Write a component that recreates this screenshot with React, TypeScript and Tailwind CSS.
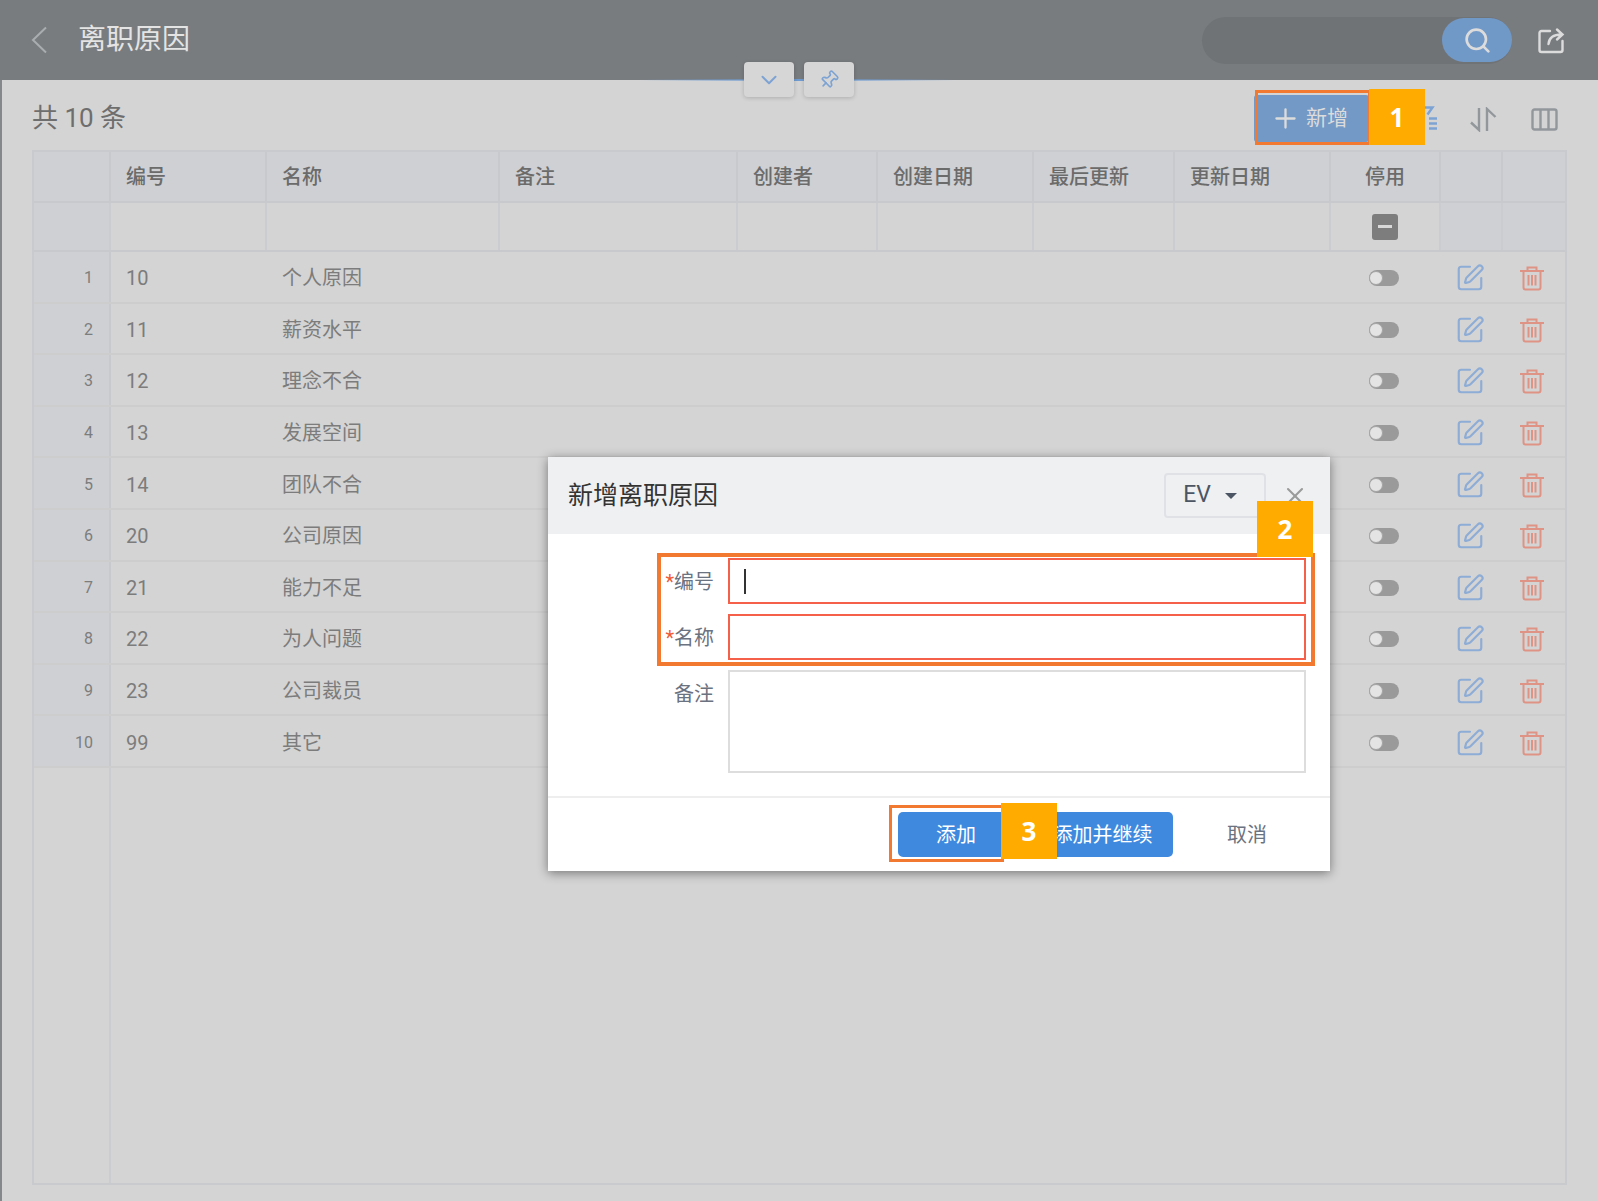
import { ChevronDown, Pin, Plus, Search, SquarePen, X } from "lucide-react";

const font = { fontFamily: 'Roboto, "Noto Sans CJK SC", sans-serif' };

const columns = [
  { title: "", width: "w-[77px]" },
  { title: "编号", width: "w-[156px]" },
  { title: "名称", width: "w-[233px]" },
  { title: "备注", width: "w-[238px]" },
  { title: "创建者", width: "w-[140px]" },
  { title: "创建日期", width: "w-[156px]" },
  { title: "最后更新", width: "w-[141px]" },
  { title: "更新日期", width: "w-[156px]" },
  { title: "停用", width: "w-[110px]" },
  { title: "", width: "w-[62px]" },
  { title: "", width: "w-[62px]" },
];

const rows = [
  { id: 10, name: "个人原因" },
  { id: 11, name: "薪资水平" },
  { id: 12, name: "理念不合" },
  { id: 13, name: "发展空间" },
  { id: 14, name: "团队不合" },
  { id: 20, name: "公司原因" },
  { id: 21, name: "能力不足" },
  { id: 22, name: "为人问题" },
  { id: 23, name: "公司裁员" },
  { id: 99, name: "其它" },
];

function BackIcon() {
  return (
    <svg width="18" height="28" viewBox="0 0 18 28" fill="none" stroke="#aaadaf" strokeWidth="2">
      <path d="M16 1.500 3 14l13 12.500" />
    </svg>
  );
}

function TrashIcon() {
  return (
    <svg width="26" height="26" viewBox="0 0 26 26" fill="none" stroke="#de9385" strokeWidth="2">
      <path d="M1 6h24M8.500 6V2.500h9V6M4.500 6v16.500a2 2 0 0 0 2 2h13a2 2 0 0 0 2-2V6M9.500 10v10.500M13 10v10.500M16.500 10v10.500" />
    </svg>
  );
}

function ExportIcon() {
  return (
    <svg width="28" height="28" viewBox="0 0 28 28" fill="none" stroke="#dcdcdc" strokeWidth="2.400" strokeLinecap="round">
      <path d="M13 5H4.500a2 2 0 0 0-2 2v17a2 2 0 0 0 2 2h19a2 2 0 0 0 2-2v-9" />
      <path d="M11.500 18c.5-6 5-9.500 13-9.500M20 3.500l5.500 5-5.500 5" />
    </svg>
  );
}

function FilterIcon() {
  return (
    <svg width="16" height="26" viewBox="0 0 16 26" fill="none" stroke="#7da3d3" strokeWidth="2.400">
      <path d="M2 2.500h9.500l-5 7" />
      <path d="M8 13.500h8M8 18.500h8M8 23.500h8" />
    </svg>
  );
}

function SortIcon() {
  return (
    <svg width="28" height="25" viewBox="0 0 28 25" fill="none" stroke="#92979c" strokeWidth="2.400">
      <path d="M10 1v22L2 15.500M18 24V2l8.500 8" />
    </svg>
  );
}

function ColumnsIcon() {
  return (
    <svg width="27" height="23" viewBox="0 0 27 23" fill="none" stroke="#92979c" strokeWidth="2.400">
      <rect x="1.500" y="1.500" width="24" height="20" rx="2" />
      <path d="M9.500 1.500v20M17.500 1.500v20" />
    </svg>
  );
}

function Marker({ n, className }: { n: number; className: string }) {
  return (
    <div className={`absolute z-30 flex h-[56px] w-[56px] items-center justify-center bg-[#ffab00] text-[26px] font-bold text-white ${className}`}
      style={{ fontFamily: '"Open Sans", sans-serif' }}>
      {n}
    </div>
  );
}

function Dialog() {
  return (
    <div className="absolute left-[548px] top-[457px] z-20 flex h-[414px] w-[782px] flex-col bg-white shadow-[0_2px_10px_rgba(0,0,0,0.45)]">
      <div className="flex h-[77px] items-center justify-between bg-[#eff0f2] pl-[20px] pr-[21px]">
        <span className="text-[25px] text-[#333]">新增离职原因</span>
        <div className="flex items-center gap-[15px]">
          <div className="flex h-[45px] w-[102px] items-center justify-center gap-[14px] rounded-[4px] border-2 border-[#dfe1e6] pr-[10px] text-[23px] text-[#4b5563]">
            EV
            <span className="h-0 w-0 border-x-[6px] border-t-[6px] border-x-transparent border-t-[#4b5563]" />
          </div>
          <X size={28} strokeWidth={1.800} color="#9a9a9a" />
        </div>
      </div>
      <div className="flex flex-1 flex-col gap-[10px] pl-[180px] pr-[24px] pt-[24px]">
        <div className="flex h-[46px] gap-[14px]">
          <label className="-ml-[80px] w-[66px] pt-[10px] text-right text-[20px] leading-[28px] text-[#6b7280]"><span className="text-[#ef5a36]">*</span>编号</label>
          <div className="flex flex-1 items-center border-2 border-[#f4604a] pl-[14px]">
            <span className="h-[25px] w-[2px] bg-[#333]" />
          </div>
        </div>
        <div className="flex h-[46px] gap-[14px]">
          <label className="-ml-[80px] w-[66px] pt-[10px] text-right text-[20px] leading-[28px] text-[#6b7280]"><span className="text-[#ef5a36]">*</span>名称</label>
          <div className="flex-1 border-2 border-[#f4604a]" />
        </div>
        <div className="flex h-[103px] gap-[14px]">
          <label className="-ml-[80px] w-[66px] pt-[10px] text-right text-[20px] leading-[28px] text-[#6b7280]">备注</label>
          <div className="flex-1 border-2 border-[#dddddd]" />
        </div>
      </div>
      <div className="flex h-[75px] items-start border-t-2 border-[#eeeeee] pl-[350px] pt-[14px]">
        <button className="h-[45px] w-[122px] rounded-[5px] bg-[#3f8ade] pr-[6px] text-[20px] text-white">添加</button>
        <button className="h-[45px] w-[153px] rounded-[5px] bg-[#3f8ade] pl-[12px] text-[20px] text-white">添加并继续</button>
        <button className="ml-[54px] h-[45px] text-[20px] text-[#6b7280]">取消</button>
      </div>
    </div>
  );
}

export default function App() {
  return (
    <div className="relative flex h-[1201px] w-[1598px] flex-col overflow-hidden bg-[#d4d4d4]" style={font}>
      <header className="flex h-[80px] shrink-0 items-center bg-[#797c7f] pl-[30px] pr-[33px]">
        <BackIcon />
        <h1 className="ml-[30px] text-[28px] text-[#e4e4e4]">离职原因</h1>
        <div className="ml-auto flex items-center gap-[25px]">
          <div className="flex h-[47px] w-[310px] items-center justify-end rounded-full bg-[#707376]">
            <div className="flex h-[44px] w-[70px] items-center justify-center rounded-full bg-[#7199c8]">
              <Search size={29} strokeWidth={2.200} color="#dcdcdc" />
            </div>
          </div>
          <ExportIcon />
        </div>
      </header>

      {/* 顶部折叠/固定按钮 */}
      <div className="absolute left-[640px] top-[79px] h-[2px] w-[315px] bg-gradient-to-r from-transparent via-[#6f9bd1] to-transparent" />
      <div className="absolute left-[744px] top-[62px] z-10 flex gap-[10px]">
        <div className="flex h-[35px] w-[50px] items-center justify-center rounded-[4px] bg-[#d6d6d6] shadow-[0_1px_4px_rgba(0,0,0,0.18)]">
          <ChevronDown size={26} strokeWidth={1.800} color="#7da3d3" />
        </div>
        <div className="flex h-[35px] w-[50px] items-center justify-center rounded-[4px] bg-[#d6d6d6] shadow-[0_1px_4px_rgba(0,0,0,0.18)]">
          <Pin size={20} strokeWidth={2} color="#7da3d3" className="rotate-45" />
        </div>
      </div>

      <div className="flex flex-1 flex-col border-l-2 border-[#85888b]">
        <div className="flex h-[70px] shrink-0 items-center pl-[30px] pr-[40px]">
          <span className="mt-[6px] text-[26px] text-[#6e6e6e]">共 10 条</span>
          <button className="ml-auto mt-[7px] flex h-[47px] w-[115px] items-center justify-center gap-[5px] rounded-[3px] bg-[#7399c6] pr-[5px] text-[21px] text-[#dcdcdc]">
            <Plus size={31} strokeWidth={1.800} />新增
          </button>
          <div className="ml-[52px] mt-[6px] w-[16px]">
            <FilterIcon />
          </div>
          <div className="ml-[32px] mt-[8px] flex items-center gap-[34px]">
            <SortIcon />
            <ColumnsIcon />
          </div>
        </div>

        <div className="ml-[30px] flex h-[1035px] w-[1535px] shrink-0 flex-col border-2 border-[#c9cacd] text-[#7c7c7c]">
          <div className="flex h-[51px] shrink-0 border-b-2 border-[#c8c9cc] bg-[#cfd0d3]">
            {columns.map((col, i) => (
              <div key={i} className={`${col.width} flex shrink-0 items-center border-r-2 border-[#c8c9cc] text-[20px] font-medium text-[#6b6b6b] last:border-r-0 ${col.title === "停用" ? "justify-center" : "pl-[15px]"}`}>
                {col.title}
              </div>
            ))}
          </div>
          <div className="flex h-[49px] shrink-0 border-b-2 border-[#c8c9cc]">
            {columns.map((col, i) => (
              <div key={i} className={`${col.width} flex shrink-0 items-center justify-center border-r-2 border-[#cbcccf] last:border-r-0 ${i === 0 || i > 8 ? "bg-[#cfd0d3]" : ""}`}>
                {col.title === "停用" && (
                  <span className="flex h-[26px] w-[26px] items-center justify-center rounded-[3px] bg-[#7d7d7d]">
                    <span className="h-[3px] w-[14px] bg-[#d8d8d8]" />
                  </span>
                )}
              </div>
            ))}
          </div>
          {rows.map((row, i) => (
            <div key={row.id} className="flex h-[51.600px] shrink-0 items-center border-b-2 border-[#cdcdcd]">
              <div className="flex h-full w-[77px] shrink-0 items-center justify-end border-r-2 border-[#c8c9cc] bg-[#cfd0d3] pr-[16px] pt-[3px] text-[16px] text-[#7d7d7d]">{i + 1}</div>
              <div className="w-[156px] shrink-0 pl-[15px] pt-[3px] text-[20px]">{row.id}</div>
              <div className="shrink-0 pl-[15px] pt-[3px] text-[20px]">{row.name}</div>
              <div className="ml-auto mr-[2px] flex w-[234px] shrink-0 items-center pt-[3px]">
                <div className="flex w-[110px] justify-center">
                  <span className="flex h-[16px] w-[30px] items-center rounded-full bg-[#9a9a9a]">
                    <span className="h-[14px] w-[14px] rounded-full border border-[#a5a5a5] bg-[#e4e4e4]" />
                  </span>
                </div>
                <div className="flex w-[62px] justify-center">
                  <SquarePen size={30} strokeWidth={1.700} color="#8dacd6" />
                </div>
                <div className="flex w-[62px] justify-center">
                  <TrashIcon />
                </div>
              </div>
            </div>
          ))}
          <div className="flex-1">
            <div className="h-full w-[77px] border-r-2 border-[#cbcccf]" />
          </div>
        </div>
      </div>

      <Dialog />

      {/* 步骤标注 */}
      <div className="absolute left-[1255px] top-[90px] z-30 h-[55px] w-[116px] border-[3px] border-[#f27a30]" />
      <Marker n={1} className="left-[1369px] top-[89px]" />
      <div className="absolute left-[657px] top-[553px] z-30 h-[113px] w-[658px] border-[4px] border-[#f27a30]" />
      <Marker n={2} className="left-[1257px] top-[501px]" />
      <div className="absolute left-[889px] top-[805px] z-30 h-[57px] w-[115px] border-[3px] border-[#f27a30]" />
      <Marker n={3} className="left-[1001px] top-[803px]" />
    </div>
  );
}
